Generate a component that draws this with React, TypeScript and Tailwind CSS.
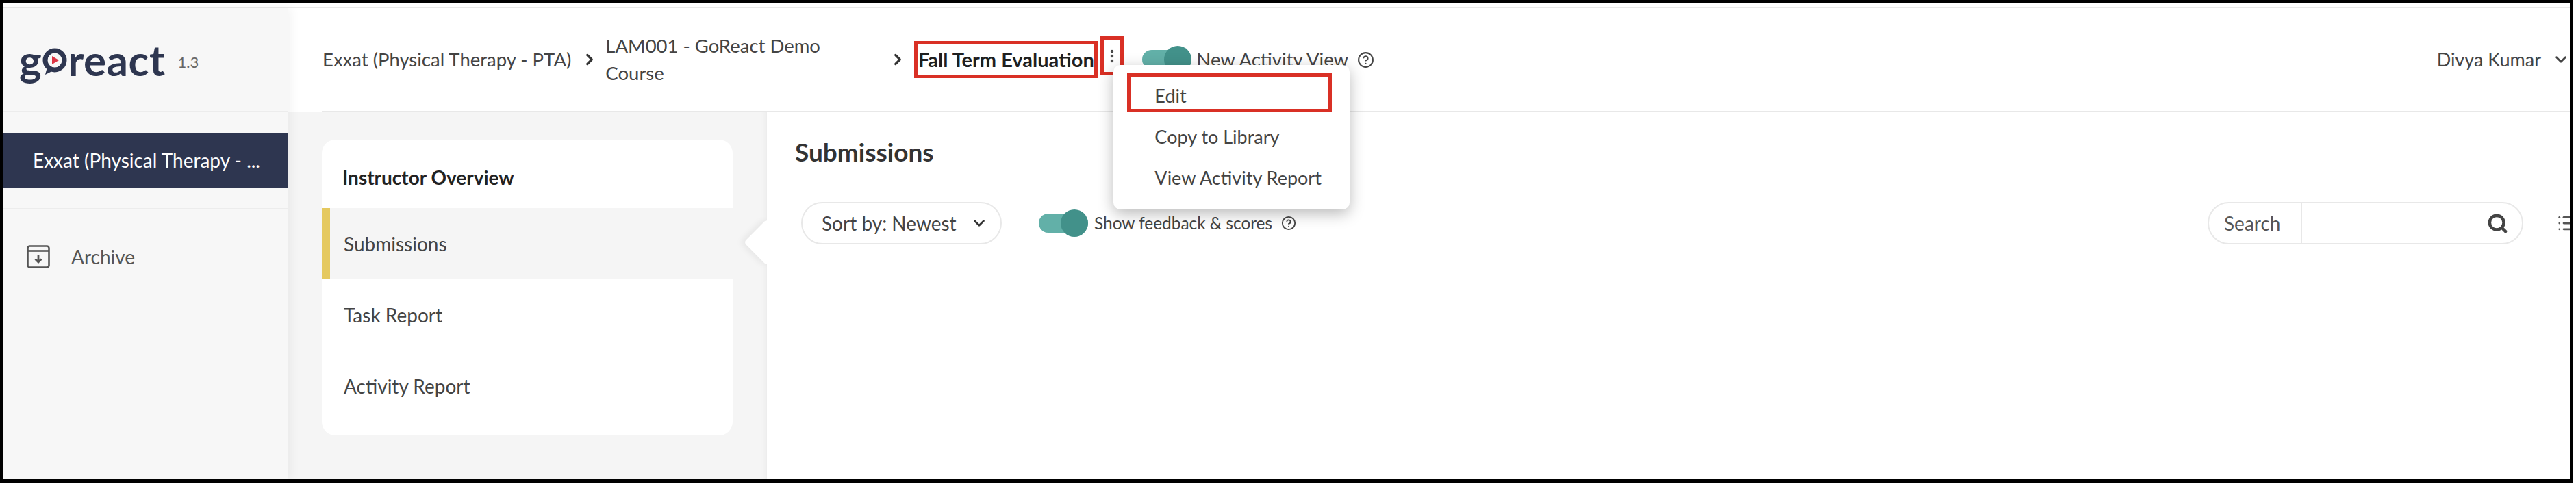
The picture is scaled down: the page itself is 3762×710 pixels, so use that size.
import React from 'react';
import { ChevronDown, ChevronRight, CircleHelp, EllipsisVertical, List, Search } from 'lucide-react';

function Toggle({ className }: { className: string }) {
  return (
    <div className={`relative h-[28px] w-[72px] shrink-0 rounded-full bg-[#62b0a8] ${className}`}>
      <div className="absolute right-0 top-[-6px] h-[40px] w-[40px] rounded-full bg-[#42918a]" />
    </div>
  );
}

function ArchiveIcon() {
  return (
    <svg width="34" height="34" viewBox="0 0 34 34" fill="none" stroke="#555" strokeWidth="2.6" className="shrink-0">
      <rect x="1.5" y="1.5" width="31" height="31" rx="3" />
      <path d="M1.5 8.5H32.5" />
      <path d="M17 14.5V25M12.5 20.5L17 25L21.5 20.5" strokeWidth="2.8" />
    </svg>
  );
}

function Logo() {
  return (
    <div className="flex items-center text-[#2e3650] font-bold text-[62px] leading-none tracking-[0.5px] font-['Lato',sans-serif]">
      <span>g</span>
      <svg width="38" height="46" viewBox="0 0 38 46" className="mt-[12px] shrink-0">
        <circle cx="19" cy="18" r="14" fill="none" stroke="#2e3650" strokeWidth="7" />
        <path d="M8 28L5 39L17 33Z" fill="#2e3650" />
        <path d="M15 12L25 18L15 24Z" fill="#dc3545" />
      </svg>
      <span>react</span>
    </div>
  );
}

function SideRow({ label }: { label: string }) {
  return <div className="flex h-[104px] items-center pl-[32px] text-[#444]">{label}</div>;
}

export default function App() {
  return (
    <div className="h-[710px] w-[3762px] bg-white pr-[4px] pb-[5px] font-['Lato',sans-serif] text-[28px] text-[#444]">
      <div className="flex h-full flex-col overflow-hidden border-t-4 border-l-[5px] border-r-[5px] border-b-[5px] border-black">
        <div className="h-[8px] shrink-0 border-b-2 border-[#e8e8e8] bg-white" />
        <div className="flex min-h-0 flex-1">
          {/* Sidebar */}
          <aside className="relative z-10 w-[415px] shrink-0 bg-[#f7f7f7] shadow-[5px_0_14px_rgba(0,0,0,0.05)]">
            <div className="flex h-[152px] items-center border-b-2 border-[#ececec] pl-[23px]">
              <Logo />
              <span className="ml-[18px] mt-[6px] text-[22px] text-[#666]">1.3</span>
            </div>
            <div className="border-b-2 border-[#ececec] pt-[30px] pb-[30px]">
              <div className="flex h-[80px] items-center bg-[#2e3650] pl-[43px] text-white">
                Exxat (Physical Therapy - ...
              </div>
            </div>
            <div className="flex items-center pl-[34px] pt-[48px]">
              <ArchiveIcon />
              <span className="ml-[31px] text-[#555]">Archive</span>
            </div>
          </aside>

          {/* Main */}
          <main className="flex min-w-0 flex-1 flex-col">
            <header className="relative z-20 ml-[50px] flex h-[152px] shrink-0 items-center border-b-2 border-[#e8e8e8] pl-px text-[27.5px]">
              <span className="whitespace-nowrap">Exxat (Physical Therapy - PTA)</span>
              <ChevronRight className="ml-[14px] h-[26px] w-[26px] shrink-0 text-[#333]" strokeWidth={3} />
              <div className="ml-[10px] w-[390px] shrink-0 leading-[40px]">LAM001 - GoReact Demo Course</div>
              <ChevronRight className="ml-[24px] h-[26px] w-[26px] shrink-0 text-[#333]" strokeWidth={3} />
              <div className="ml-[11px] flex h-[54px] w-[268px] shrink-0 items-center justify-center whitespace-nowrap border-[5px] border-[#d93025] text-[29px] font-bold text-[#1f1f1f]">
                Fall Term Evaluation
              </div>
              <div className="relative mb-[11px] ml-[4px] flex h-[57px] w-[34px] shrink-0 items-center justify-center border-[5px] border-[#d93025]">
                <EllipsisVertical className="h-[24px] w-[24px] text-[#444]" strokeWidth={2.5} />
                <div className="absolute left-[14px] top-[37px] z-20 h-[211px] w-[345px] rounded-[10px] bg-white pl-[60px] pt-[15px] text-[27px] shadow-[0_6px_22px_rgba(0,0,0,0.28)]">
                  <div className="absolute left-[20px] top-[12px] h-[57px] w-[299px] border-[5px] border-[#d93025]" />
                  <div className="flex h-[60px] items-center">Edit</div>
                  <div className="flex h-[60px] items-center whitespace-nowrap">Copy to Library</div>
                  <div className="flex h-[60px] items-center whitespace-nowrap">View Activity Report</div>
                </div>
              </div>
              <Toggle className="ml-[27px]" />
              <span className="ml-[7px] whitespace-nowrap">New Activity View</span>
              <CircleHelp className="ml-[13px] h-[25px] w-[25px] shrink-0 text-[#444]" strokeWidth={2} />
              <span className="ml-auto whitespace-nowrap text-[27px]">Divya Kumar</span>
              <ChevronDown className="ml-[16px] h-[26px] w-[26px] shrink-0 text-[#444]" strokeWidth={2.5} />
            </header>

            <div className="flex min-h-0 flex-1">
              {/* Overview panel */}
              <div className="relative w-[700px] shrink-0 bg-[#f5f5f5] pl-[50px] pt-[40px] shadow-[inset_-10px_0_8px_-8px_rgba(0,0,0,0.05)]">
                <div className="w-[600px] overflow-hidden rounded-[20px] bg-white">
                  <div className="flex h-[100px] items-center pl-[30px] pt-[10px] font-bold text-[#222]">Instructor Overview</div>
                  <div className="flex h-[104px] items-center border-l-[12px] border-[#e5c95f] bg-[#f5f5f5] pl-[20px]">
                    Submissions
                  </div>
                  <SideRow label="Task Report" />
                  <SideRow label="Activity Report" />
                  <div className="h-[20px]" />
                </div>
                <div className="absolute right-[-24px] top-[166px] h-[48px] w-[48px] rotate-45 rounded-[5px] bg-white shadow-[-4px_4px_10px_rgba(0,0,0,0.06)]" />
              </div>

              {/* Submissions */}
              <div className="relative min-w-0 flex-1 bg-white pl-[41px] pt-[38px]">
                <h1 className="text-[37px] font-bold leading-[40px] text-[#333]">Submissions</h1>
                <div className="-ml-[41px] mt-[53px] flex items-center pl-[50px]">
                  <div className="flex h-[62px] w-[293px] shrink-0 items-center rounded-full border-2 border-[#e8e8e8] pl-[28px]">
                    <span className="whitespace-nowrap">Sort by: Newest</span>
                    <ChevronDown className="ml-[20px] h-[26px] w-[26px] text-[#333]" strokeWidth={2.5} />
                  </div>
                  <Toggle className="ml-[54px]" />
                  <span className="ml-[9px] whitespace-nowrap text-[24.4px]">{'Show feedback & scores'}</span>
                  <CircleHelp className="ml-[13px] h-[22px] w-[22px] shrink-0 text-[#444]" strokeWidth={2} />
                  <div className="ml-auto flex h-[62px] w-[461px] shrink-0 items-center rounded-full border-2 border-[#e8e8e8]">
                    <div className="flex h-full w-[136px] items-center border-r-2 border-[#e8e8e8] pl-[22px] text-[#555]">
                      Search
                    </div>
                    <Search className="ml-auto mr-[20px] h-[31px] w-[31px] text-[#444]" strokeWidth={3.5} />
                  </div>
                  <List className="-mr-[11px] ml-[49px] h-[30px] w-[30px] shrink-0 text-[#555]" strokeWidth={2.2} />
                </div>
              </div>
            </div>
          </main>
        </div>
      </div>
    </div>
  );
}
